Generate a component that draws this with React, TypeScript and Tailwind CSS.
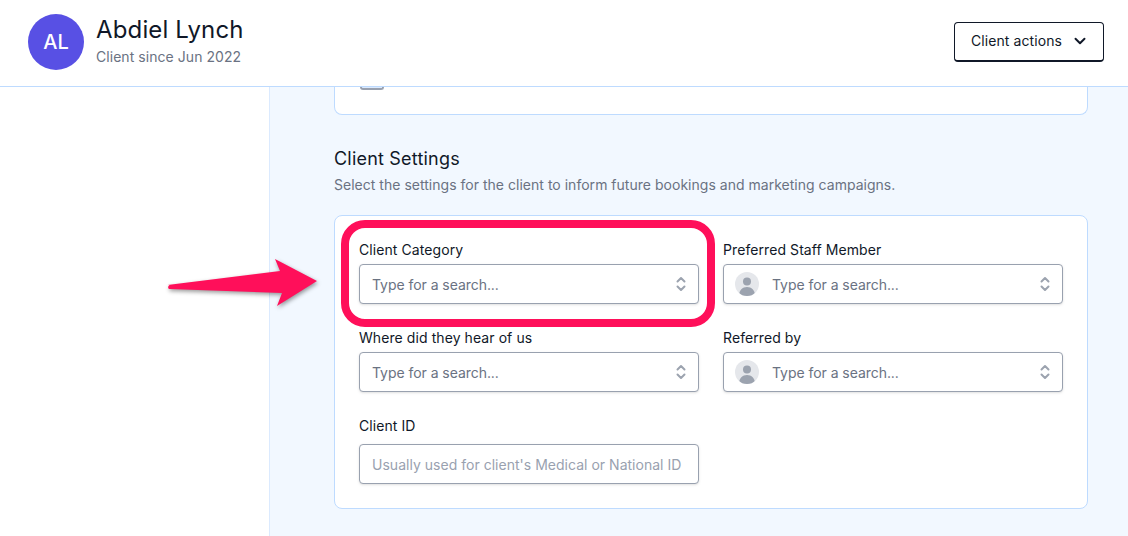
import { ChevronDown } from "lucide-react";

const font = "font-['Inter',sans-serif]";

const SelectChevrons = () => (
  <svg width="12" height="20" viewBox="0 0 12 20" fill="none" stroke="#9ca3af" strokeWidth="2" strokeLinecap="round" strokeLinejoin="round" className="ml-auto">
    <path d="M2.5 7.5 6 4l3.5 3.5" />
    <path d="M2.5 12.5 6 16l3.5-3.5" />
  </svg>
);

const UserAvatar = () => (
  <span className="mr-[13px] flex h-6 w-6 shrink-0 items-center justify-center overflow-hidden rounded-full bg-gray-200">
    <svg width="24" height="24" viewBox="0 0 24 24" fill="#9ca3af">
      <circle cx="12" cy="9.5" r="4" />
      <path d="M4 24c0-6 3.5-9 8-9s8 3 8 9z" />
    </svg>
  </span>
);

const SearchSelect = ({ avatar }: { avatar?: boolean }) => (
  <div className={`flex h-10 items-center rounded border border-gray-400 bg-white pr-[11px] shadow-sm ${avatar ? "pl-[11px]" : "pl-3"}`}>
    {avatar && <UserAvatar />}
    <span className="mt-[2px] text-sm tracking-[-0.05px] text-gray-500">Type for a search...</span>
    <SelectChevrons />
  </div>
);

const Field = ({ label, avatar }: { label: string; avatar?: boolean }) => (
  <div>
    <div className="mb-1 h-5 text-sm leading-5 tracking-[0.08px] text-gray-900">{label}</div>
    <SearchSelect avatar={avatar} />
  </div>
);

export default function App() {
  return (
    <div className={`relative flex h-[536px] w-[1128px] flex-col overflow-hidden bg-white ${font}`}>
      <header className="flex h-[87px] shrink-0 items-center border-b border-blue-200 bg-white pb-[2px] pl-7 pr-6">
        <div className="flex h-14 w-14 items-center justify-center rounded-full bg-[#5850e4] text-xl font-medium text-white">AL</div>
        <div className="ml-3 -mt-[3px]">
          <div className="text-2xl leading-8 tracking-[0.15px] text-gray-900">Abdiel Lynch</div>
          <div className="mt-[1px] text-sm leading-5 tracking-[0.05px] text-gray-500">Client since Jun 2022</div>
        </div>
        <button className="ml-auto flex h-10 w-[150px] items-center rounded border border-b-2 border-gray-900 bg-white pb-[1px] pl-4 text-sm tracking-[0.08px] text-gray-900">
          Client actions
          <ChevronDown size={18} strokeWidth={2.6} className="ml-[9px]" />
        </button>
      </header>

      <div className="flex min-h-0 flex-1">
        <aside className="w-[270px] shrink-0 border-r border-blue-100 bg-white" />
        <main className="flex-1 bg-[#f2f8ff] pl-16 pr-10">
          <div className="h-7 overflow-hidden rounded-b-lg border border-t-0 border-blue-200 bg-white pl-[25px]">
            <div className="h-[3px] w-[24px] rounded-b border-2 border-t-0 border-gray-400 bg-blue-100" />
          </div>

          <h2 className="mt-[30px] text-lg leading-[28px] font-normal tracking-[0.2px] text-gray-900">Client Settings</h2>
          <p className="mt-[2px] text-sm leading-5 tracking-[0.02px] text-gray-500">
            Select the settings for the client to inform future bookings and marketing campaigns.
          </p>

          <section className="mt-5 rounded-lg border border-blue-200 bg-white p-6">
            <div className="grid grid-cols-2 gap-6">
              <Field label="Client Category" />
              <Field label="Preferred Staff Member" avatar />
              <Field label="Where did they hear of us" />
              <Field label="Referred by" avatar />
              <div>
                <div className="mb-2 h-5 text-sm leading-5 tracking-[0.08px] text-gray-900">Client ID</div>
                <div className="flex h-10 items-center rounded border border-gray-400 bg-white pl-3 shadow-sm">
                  <span className="mt-[2px] text-sm tracking-[0.02px] text-gray-400">Usually used for client's Medical or National ID</span>
                </div>
              </div>
            </div>
          </section>
        </main>
      </div>

      {/* annotation overlay */}
      <div className="absolute left-[341px] top-[220px] h-[107px] w-[374px] rounded-3xl border-8 border-[#ff0f5a]" />
      <svg className="absolute left-[160px] top-[250px] drop-shadow-[1px_2px_2px_rgba(0,0,0,0.4)]" width="170" height="66" viewBox="160 250 170 66">
        <path d="M167.5 285 280 271l-5-12 42 22-40 25 5-13-113-4q-2-2 .5-4z" fill="#ff0f5a" />
      </svg>
    </div>
  );
}
